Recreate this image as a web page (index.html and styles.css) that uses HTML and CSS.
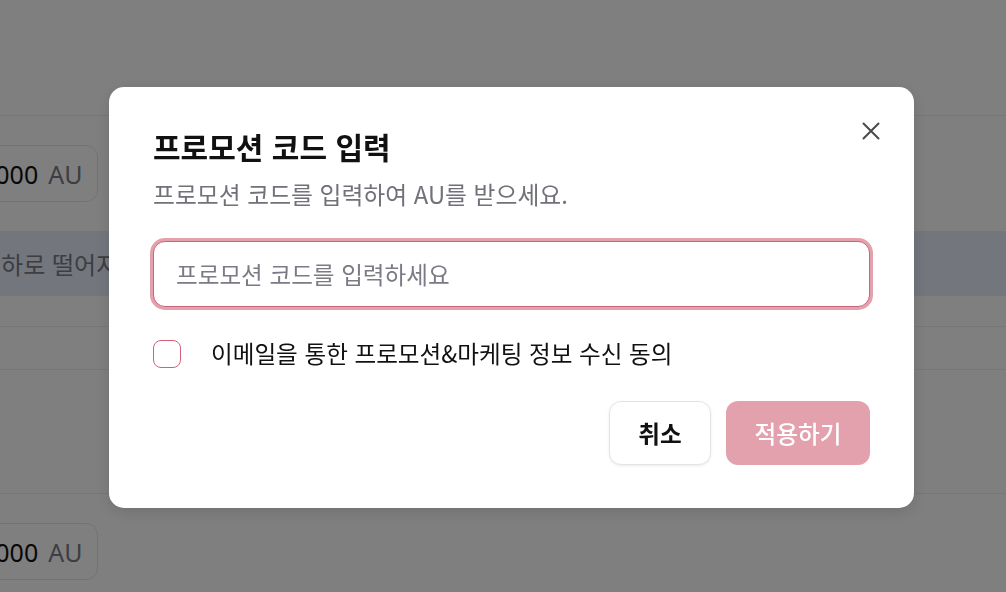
FILE: index.html
```html
<!DOCTYPE html>
<html lang="ko">
<head>
  <meta charset="UTF-8" />
  <meta name="viewport" content="width=device-width, initial-scale=1.0"/>
  <title>프로모션 코드 입력</title>
  <link rel="stylesheet" href="styles.css">
</head>
<body>
  <div class="page">
    <div class="page-top"></div>
    <div class="price-row">
      <div class="chip"><span class="chip-num">10,000</span><span class="chip-unit">AU</span></div>
    </div>
    <div class="notice">이하로 떨어지면 알림을 보내드립니다</div>
    <div class="gap-row"></div>
    <div class="thin-row"></div>
    <div class="tall-row"></div>
    <div class="price-row">
      <div class="chip"><span class="chip-num">10,000</span><span class="chip-unit">AU</span></div>
    </div>
  </div>

  <div class="overlay">
    <div class="modal">
      <button class="close-btn" aria-label="닫기">
        <svg width="18" height="18" viewBox="0 0 18 18"><path d="M1.5 1.5L16.5 16.5M16.5 1.5L1.5 16.5" stroke="#4a4a4a" stroke-width="2" stroke-linecap="round"/></svg>
      </button>
      <h2 class="modal-title">프로모션 코드 입력</h2>
      <p class="modal-desc">프로모션 코드를 입력하여 AU를 받으세요.</p>
      <input class="code-input" type="text" placeholder="프로모션 코드를 입력하세요">
      <label class="agree">
        <span class="check-box"></span>
        <span>이메일을 통한 프로모션&amp;마케팅 정보 수신 동의</span>
      </label>
      <div class="actions">
        <button class="btn btn-cancel">취소</button>
        <button class="btn btn-apply">적용하기</button>
      </div>
    </div>
  </div>
</body>
</html>
```

FILE: styles.css
```css
* {
  margin: 0;
  padding: 0;
  box-sizing: border-box;
}

body {
  font-family: "Noto Sans CJK KR", "Noto Sans", sans-serif;
  background: #fff;
  overflow: hidden;
  width: 1006px;
  height: 592px;
}

/* page behind the dialog */
.page {
  width: 1006px;
  overflow: hidden;
}

.page-top {
  height: 116px;
  border-bottom: 1px solid #eee;
}

.price-row {
  height: 115px;
  display: flex;
  align-items: center;
}

.chip {
  margin-left: -56px;
  height: 57px;
  padding: 0 15px;
  border: 1px solid #e6e6e6;
  border-radius: 12px;
  display: flex;
  align-items: center;
  gap: 10px;
  font-family: "Noto Sans", sans-serif;
  font-size: 25px;
}

.chip-num { color: #111; }
.chip-unit { color: #7a7a86; }

.notice {
  height: 65px;
  background: #e6eefb;
  display: flex;
  align-items: center;
  margin-left: -21px;
  font-size: 24px;
  color: #7a7a86;
}

.gap-row {
  height: 31px;
  border-bottom: 1px solid #eee;
}

.thin-row {
  height: 43px;
  border-bottom: 1px solid #eee;
}

.tall-row {
  height: 124px;
  border-bottom: 1px solid #eee;
}

/* dialog */
.overlay {
  position: fixed;
  top: 0;
  left: 0;
  width: 100%;
  height: 100%;
  background: rgba(0, 0, 0, 0.5);
  display: flex;
  justify-content: center;
  align-items: center;
  padding-left: 17px;
  padding-top: 3px;
}

.modal {
  position: relative;
  width: 805px;
  background: #fff;
  border-radius: 15px;
  padding: 40px 44px 43px;
  box-shadow: 0 4px 16px rgba(0, 0, 0, 0.12);
  display: flex;
  flex-direction: column;
}

.close-btn {
  position: absolute;
  top: 35px;
  right: 34px;
  width: 18px;
  height: 18px;
  border: none;
  background: none;
  cursor: pointer;
  display: flex;
}

.modal-title {
  font-size: 30px;
  font-weight: 700;
  line-height: 39px;
  color: #111;
}

.modal-desc {
  margin-top: 11px;
  font-size: 23.8px;
  line-height: 33px;
  color: #71717a;
}

.code-input {
  margin-top: 31px;
  height: 66px;
  padding: 0 22px;
  border: 1px solid #c9647b;
  border-radius: 12px;
  box-shadow: 0 0 0 3px #e3a1ad;
  font-family: inherit;
  font-size: 23.6px;
  color: #111;
  outline: none;
}

.code-input::placeholder {
  color: #7b7b85;
}

.agree {
  margin-top: 30px;
  display: flex;
  align-items: center;
  gap: 30px;
  font-size: 23.6px;
  line-height: 33px;
  color: #111;
  cursor: pointer;
}

.check-box {
  width: 28px;
  height: 28px;
  border: 1px solid #d4607a;
  border-radius: 8px;
  flex-shrink: 0;
}

.actions {
  margin-top: 31px;
  display: flex;
  justify-content: flex-end;
  gap: 15px;
}

.btn {
  height: 64px;
  border-radius: 12px;
  font-family: inherit;
  font-size: 23.6px;
  cursor: pointer;
}

.btn-cancel {
  width: 102px;
  background: #fff;
  border: 1px solid #e4e4e7;
  box-shadow: 0 1px 3px rgba(0, 0, 0, 0.08);
  font-weight: 700;
  color: #111;
}

.btn-apply {
  width: 144px;
  background: #e3a1ad;
  border: none;
  font-weight: 500;
  color: #fff;
}
```
